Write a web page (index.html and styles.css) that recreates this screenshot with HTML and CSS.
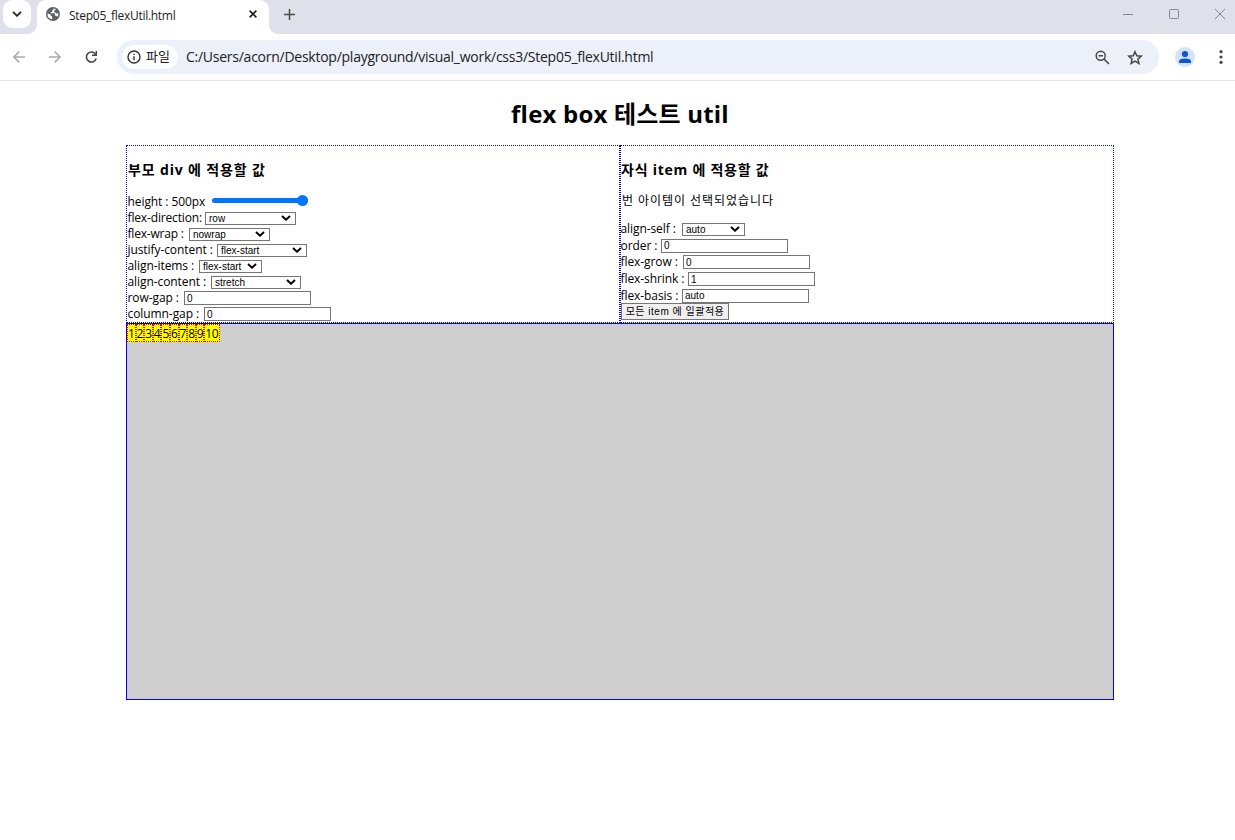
FILE: index.html
```html
<!DOCTYPE html>
<html lang="ko">
<head>
<meta charset="utf-8">
<title>Step05_flexUtil.html</title>
<link rel="stylesheet" href="styles.css">
</head>
<body>
<header class="tabs">
  <div class="tab-search"><svg width="10" height="6" viewBox="0 0 10 6"><path d="M1 .8 5 4.8 9 .8" fill="none" stroke="#202124" stroke-width="1.8"/></svg></div>
  <div class="tab">
    <svg class="globe" width="14" height="14" viewBox="0 0 14 14"><circle cx="7" cy="7" r="7" fill="#5f6368"/><path d="M7.8 1.4 Q7.8 3 6.2 3.3 V4.5 Q6.2 5 5.6 5 H4.8 V6.2 H8 Q9 6.2 9 7.2 V8.7 H10.3 Q11 8.7 11.3 10 Q12.6 8.7 12.5 6.6 H10.5 Q9.6 6.6 9.6 5.4 H8.2 V4 Q8.2 3.1 9.5 3.1 V2 ZM1.5 6.6 4.7 7.6 V8.5 Q4.7 9.3 6.2 9.4 V12.4 Q2 12 1.5 7.6Z" fill="#fff"/></svg>
    <span class="tab-title">Step05_flexUtil.html</span>
    <svg class="tab-close" width="8" height="8" viewBox="0 0 8 8"><path d="M.6.6 7.4 7.4M7.4.6.6 7.4" stroke="#202124" stroke-width="1.6"/></svg>
  </div>
  <svg class="plus" width="11" height="11" viewBox="0 0 11 11"><path d="M5.5 0V11M0 5.5H11" stroke="#474747" stroke-width="1.5"/></svg>
  <div class="window-buttons">
    <svg width="10" height="10" viewBox="0 0 10 10"><path d="M0 5.5H10" stroke="#85888c"/></svg>
    <svg width="10" height="10" viewBox="0 0 10 10"><rect x=".5" y=".5" width="9" height="9" rx="1" fill="none" stroke="#85888c"/></svg>
    <svg width="10" height="10" viewBox="0 0 10 10"><path d="M0 0 10 10M10 0 0 10" stroke="#85888c"/></svg>
  </div>
</header>
<nav class="toolbar">
  <svg class="back" width="12" height="12" viewBox="0 0 12 12"><path d="M12 6H1M6.3.6.9 6l5.4 5.4" fill="none" stroke="#a9abae" stroke-width="1.5"/></svg>
  <svg class="forward" width="12" height="12" viewBox="0 0 12 12"><path d="M0 6H11M5.7.6 11.1 6l-5.4 5.4" fill="none" stroke="#a9abae" stroke-width="1.5"/></svg>
  <svg class="reload" width="13" height="12" viewBox="0 0 13 12"><path d="M10.8 3.6A5 5 0 1 0 11.2 7.5" fill="none" stroke="#474747" stroke-width="1.6"/><path d="M12 0V5H7V3.6H10.6V0Z" fill="#474747"/></svg>
  <div class="address">
    <div class="file-chip"><svg width="14" height="14" viewBox="0 0 14 14"><circle cx="7" cy="7" r="6" fill="none" stroke="#303134" stroke-width="1.4"/><path d="M7 6.2V10.2M7 3.7V5.1" stroke="#303134" stroke-width="1.4"/></svg><span>파일</span></div>
    <span class="url">C:/Users/acorn/Desktop/playground/visual_work/css3/Step05_flexUtil.html</span>
    <svg class="lens" width="15" height="15" viewBox="0 0 15 15"><circle cx="5.7" cy="5.7" r="4.5" fill="none" stroke="#474747" stroke-width="1.5"/><path d="M3.5 5.7H8M9 9 14 14" stroke="#474747" stroke-width="1.6"/></svg>
    <svg class="star" width="16" height="15" viewBox="0 0 16 15"><path d="M8 1.7 9.8 5.8 14.2 6.2 10.9 9.1 11.9 13.4 8 11.1 4.1 13.4 5.1 9.1 1.8 6.2 6.2 5.8Z" fill="none" stroke="#474747" stroke-width="1.5"/></svg>
  </div>
  <svg class="profile" width="20" height="20" viewBox="0 0 20 20"><circle cx="10" cy="10" r="10" fill="#d3e3fd"/><circle cx="10" cy="7" r="3.1" fill="#0b57d0"/><path d="M4 16V14.3Q4 11.4 10 11.4T16 14.3V16Z" fill="#0b57d0"/></svg>
  <svg class="more" width="4" height="14" viewBox="0 0 4 14"><g fill="#474747"><circle cx="2" cy="1.7" r="1.6"/><circle cx="2" cy="7" r="1.6"/><circle cx="2" cy="12.3" r="1.6"/></g></svg>
</nav>
<main class="page">
  <h1>flex box 테스트 util</h1>
  <div class="panels">
    <section class="panel parent">
      <h3>부모 div 에 적용할 값</h3>
      <div class="row"><label class="w-height">height : 500px</label><span class="slider"><span class="thumb"></span></span></div>
      <div class="row"><label class="w-direction">flex-direction:</label><span class="select s91">row<svg class="chev" viewBox="0 0 10 6"><path d="M1 1 5 4.7 9 1"/></svg></span></div>
      <div class="row"><label class="w-wrap">flex-wrap :</label><span class="select s81">nowrap<svg class="chev" viewBox="0 0 10 6"><path d="M1 1 5 4.7 9 1"/></svg></span></div>
      <div class="row"><label class="w-justify">justify-content :</label><span class="select s90">flex-start<svg class="chev" viewBox="0 0 10 6"><path d="M1 1 5 4.7 9 1"/></svg></span></div>
      <div class="row"><label class="w-items">align-items :</label><span class="select s63">flex-start<svg class="chev" viewBox="0 0 10 6"><path d="M1 1 5 4.7 9 1"/></svg></span></div>
      <div class="row"><label class="w-content">align-content :</label><span class="select s90">stretch<svg class="chev" viewBox="0 0 10 6"><path d="M1 1 5 4.7 9 1"/></svg></span></div>
      <div class="row"><label class="w-rowgap">row-gap :</label><input value="0"></div>
      <div class="row"><label class="w-colgap">column-gap :</label><input value="0"></div>
    </section>
    <section class="panel child">
      <h3>자식 item 에 적용할 값</h3>
      <p>번 아이템이 선택되었습니다</p>
      <div class="row"><label class="w-self">align-self :</label><span class="select s63">auto<svg class="chev" viewBox="0 0 10 6"><path d="M1 1 5 4.7 9 1"/></svg></span></div>
      <div class="row"><label class="w-order">order :</label><input value="0"></div>
      <div class="row"><label class="w-grow">flex-grow :</label><input value="0"></div>
      <div class="row"><label class="w-shrink">flex-shrink :</label><input value="1"></div>
      <div class="row"><label class="w-basis">flex-basis :</label><input value="auto"></div>
      <button>모든 item 에 일괄적용</button>
    </section>
  </div>
  <div class="container">
    <div>1</div><div>2</div><div>3</div><div>4</div><div>5</div><div>6</div><div>7</div><div>8</div><div>9</div><div class="ten">10</div>
  </div>
</main>
</body>
</html>
```
FILE: styles.css
```css
* { box-sizing: border-box; }
body { margin: 0; height: 840px; overflow: hidden; background: #fff; color: #000; font: 12px/16px "Open Sans", "Noto Sans CJK KR", sans-serif; }
svg { display: block; flex: none; }
.tabs { display: flex; height: 34px; background: #dee1e9; }
.tab-search { width: 28px; height: 28px; margin: 0 6px 0 3px; padding: 11px 9px; border-radius: 9px; background: #fff; }
.tab { position: relative; display: flex; width: 232px; background: #fff; border-radius: 9px 9px 0 0; }
.tab::before, .tab::after { content: ""; position: absolute; bottom: 0; width: 9px; height: 9px; }
.tab::before { left: -9px; background: radial-gradient(circle at 0 0, transparent 8.5px, #fff 9px); }
.tab::after { right: -9px; background: radial-gradient(circle at 100% 0, transparent 8.5px, #fff 9px); }
.globe { margin: 7px 9px 0; }
.tab-title { width: 184px; padding-top: 8px; white-space: nowrap; letter-spacing: -.28px; color: #202124; }
.tab-close { margin-top: 10px; margin-left: -4px; }
.plus { margin: 9px 0 0 14.5px; }
.window-buttons { display: flex; gap: 36px; margin: 9px 5px 0 auto; padding-right: 5px; }
.toolbar { display: flex; align-items: center; height: 47px; border-bottom: 1px solid #dfe1e5; background: #fff; }
.back { margin-left: 13px; }
.forward { margin-left: 24px; }
.reload { margin-left: 23.5px; }
.address { display: flex; align-items: center; width: 1042px; height: 34px; margin-left: 19.5px; padding: 0 16px 0 5px; border-radius: 17px; background: #ecf0f9; }
.file-chip { display: flex; align-items: center; gap: 5px; width: 56px; height: 24px; padding-left: 5px; border-radius: 12px; background: #fff; font-size: 13px; color: #202124; white-space: nowrap; }
.file-chip span { margin-top: -2px; }
.url { margin-left: 8px; font-size: 14px; letter-spacing: -.255px; color: #202124; white-space: nowrap; }
.lens { margin-left: auto; }
.star { margin-left: 17px; }
.profile { margin-left: 16px; }
.more { margin-left: 24px; }
.page { width: 988px; margin-left: 126px; }
h1 { margin: 0; padding-top: 16px; height: 64px; font-size: 24px; line-height: 34px; text-align: center; font-weight: 700; letter-spacing: .2px; }
.panels { display: flex; height: 178px; }
.panel { width: 494px; border: 1px dotted #00f; }
h3 { margin: 0; padding: 14px 0 0 1px; height: 47px; font-size: 14px; line-height: 20px; font-weight: 700; letter-spacing: .85px; }
.parent h3 { height: 48px; }
.child h3 { padding-left: 0; letter-spacing: .75px; }
.row { display: flex; align-items: center; height: 16px; padding-left: 1px; }
.child .row { height: 16.6px; padding-left: 0; }
label { flex: none; white-space: nowrap; letter-spacing: -.08px; text-indent: -.5px; }
p { margin: 0; padding: 0 0 0 1px; height: 28px; letter-spacing: .95px; }
.select, input { font: 10px/11px "Liberation Sans", "Noto Sans CJK KR", sans-serif; border: 1px solid #767676; background: #fff; color: #000; }
.select { position: relative; height: 13px; padding-left: 3px; }
.chev { position: absolute; right: 4px; top: 2px; width: 10px; height: 6px; fill: none; stroke: #000; stroke-width: 2; }
.s91 { width: 91px; } .s81 { width: 81px; } .s90 { width: 90px; } .s63 { width: 63px; }
input { width: 127px; height: 14px; margin: 0; padding: 1px 2px; border-radius: 0; }
.slider { position: relative; width: 96px; height: 5px; margin-bottom: 3px; border-radius: 3px; background: #0075ff; }
.thumb { position: absolute; right: 0; top: -3px; width: 11px; height: 11px; border-radius: 50%; background: #0075ff; }
.w-height { width: 84px; } .w-direction { width: 77px; letter-spacing: -.15px; } .w-wrap { width: 61px; letter-spacing: -.2px; } .w-justify { width: 89px; } .w-items { width: 71px; } .w-content { width: 83px; } .w-rowgap { width: 56px; } .w-colgap { width: 76px; }
.w-self { width: 61px; } .w-order { width: 40px; } .w-grow { width: 62px; } .w-shrink { width: 67px; } .w-basis { width: 61px; }
button { display: block; width: 108px; height: 17px; margin: -1px 0 0; padding: 0; border: 1px solid #767676; border-radius: 0; background: #efefef; font: 10px/13px "Liberation Sans", "Noto Sans CJK KR", sans-serif; letter-spacing: .5px; color: #000; white-space: nowrap; }
.container { display: flex; align-items: flex-start; height: 377px; border: 1px solid #00f; background: #cecece; }
.container div { width: 8.6px; height: 18px; border: 1px dotted #f00; background: #ff0; line-height: 18px; letter-spacing: -.4px; }
.container .ten { width: 15.6px; }
```
